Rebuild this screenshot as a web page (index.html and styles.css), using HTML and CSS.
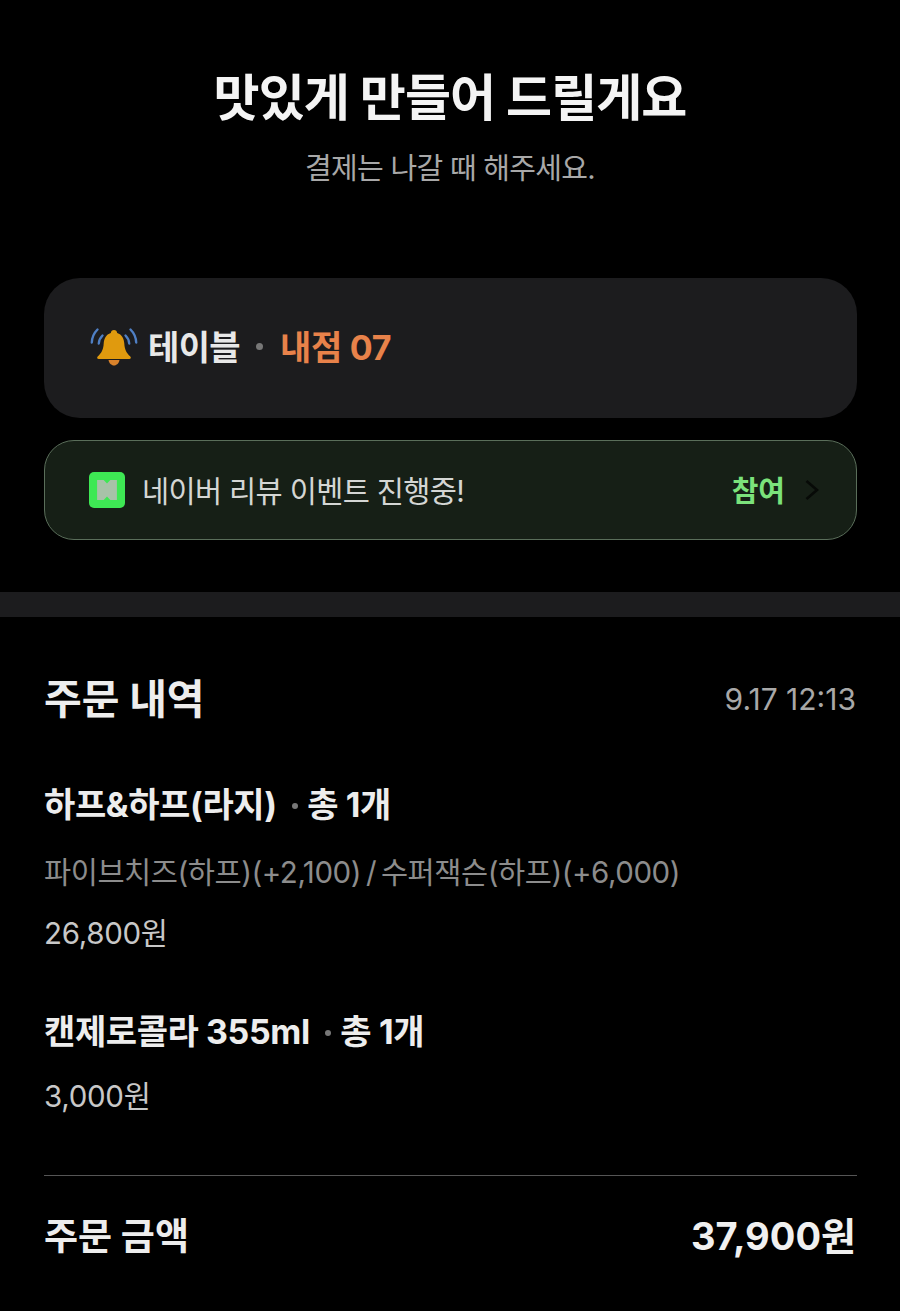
FILE: index.html
```html
<!DOCTYPE html>
<html lang="ko">
<head>
    <meta charset="UTF-8">
    <meta name="viewport" content="width=device-width, initial-scale=1.0">
    <title>주문 완료</title>
    <link rel="stylesheet" href="styles.css">
</head>
<body>

    <header class="top">
        <h1>맛있게 만들어 드릴게요</h1>
        <p>결제는 나갈 때 해주세요.</p>
    </header>

    <section class="cards">
        <div class="table-card">
            <svg class="bell" width="48" height="42" viewBox="0 0 48 42" fill="none">
                <path d="M24 3c1.800 0 3 1.200 3.200 3 4.800 1.500 6.800 5.500 7.100 10.500.3 6 2.200 9.500 6 13 1.100 1.100.4 2.500-1 2.500H8.700c-1.400 0-2.100-1.400-1-2.500 3.800-3.500 5.700-7 6-13C14 11.500 16 7.500 20.800 6 21 4.200 22.200 3 24 3z" fill="#e09a0e"/>
                <path d="M18.500 33h11c-.6 3.200-2.800 5.500-5.500 5.500s-4.900-2.300-5.500-5.500z" fill="#d9822b"/>
                <path d="M12.500 8.500c-2.300 2.300-3.500 5-3.700 8M7.500 2.500C4 6 2 10.500 1.800 15.500M35.500 8.500c2.300 2.300 3.500 5 3.700 8M40.500 2.500C44 6 46 10.500 46.200 15.500" stroke="#4f7fc4" stroke-width="2.400" stroke-linecap="round"/>
            </svg>
            <span class="table-label">테이블</span>
            <span class="table-dot"></span>
            <span class="table-name">내점 07</span>
        </div>

        <div class="event-card">
            <span class="naver-icon">
                <svg width="22" height="22" viewBox="0 0 20 20">
                    <path d="M1 1h6l3 3 3-3h6v18h-6l-3-3-3 3H1z" fill="#a8c2a8"/>
                </svg>
            </span>
            <span class="event-text">네이버 리뷰 이벤트 진행중!</span>
            <span class="event-join">참여</span>
            <svg class="chevron" width="16" height="24" viewBox="0 0 16 24" fill="none">
                <path d="M2.500 3l10.500 9-10.500 9" stroke="#070a07" stroke-width="2.600"/>
            </svg>
        </div>
    </section>

    <div class="divider"></div>

    <section class="order">
        <div class="order-head">
            <h2>주문 내역</h2>
            <span class="order-date">9.17 12:13</span>
        </div>

        <div class="item">
            <div class="item-title">하프&amp;하프(라지) <span class="item-dot"></span><span>총 1개</span></div>
            <div class="item-option">파이브치즈(하프)(+2,100) / 수퍼잭슨(하프)(+6,000)</div>
            <div class="item-price">26,800원</div>
        </div>

        <div class="item">
            <div class="item-title">캔제로콜라 355ml <span class="item-dot"></span><span>총 1개</span></div>
            <div class="item-price">3,000원</div>
        </div>

        <div class="total">
            <span class="total-label">주문 금액</span>
            <span class="total-price">37,900원</span>
        </div>
    </section>

</body>
</html>
```

FILE: styles.css
```css
* {
    box-sizing: border-box;
}
html, body {
    margin: 0;
    background: #000;
}
body {
    height: 1311px;
    overflow: hidden;
    color: #f0f0f0;
    font-family: Inter, "Noto Sans CJK KR", sans-serif;
}

.top {
    padding-top: 68px;
    text-align: center;
}
.top h1 {
    margin: 0;
    font-size: 50px;
    line-height: 60px;
    font-weight: 700;
    letter-spacing: -0.9px;
    color: #f4f4f4;
}
.top p {
    margin: 21px 0 0;
    font-size: 29px;
    line-height: 40px;
    font-weight: 400;
    letter-spacing: -0.7px;
    color: #a8a8a8;
}

.cards {
    padding: 89px 43px 0 44px;
}
.table-card {
    display: flex;
    align-items: center;
    height: 140px;
    padding: 0 44px 0 46px;
    background: #1c1c1e;
    border-radius: 36px;
}
.bell {
    margin: 0 10px 0 0;
}
.table-label {
    margin-bottom: 6px;
    font-size: 34px;
    font-weight: 700;
    letter-spacing: -0.6px;
    color: #e8e8e8;
}
.table-dot {
    width: 7px;
    height: 7px;
    margin: 0 17px 3px 16px;
    border-radius: 50%;
    background: #777;
}
.table-name {
    margin-bottom: 6px;
    font-size: 34px;
    font-weight: 700;
    letter-spacing: -0.3px;
    color: #e8824a;
}

.event-card {
    display: flex;
    align-items: center;
    height: 100px;
    margin-top: 22px;
    padding: 0 36px 0 44px;
    background: #161f16;
    border: 1.500px solid #5a6e5a;
    border-radius: 30px;
}
.naver-icon {
    display: flex;
    align-items: center;
    justify-content: center;
    width: 36px;
    height: 36px;
    margin-right: 17px;
    background: #3ee854;
    border-radius: 5px;
}
.event-text {
    flex: 1;
    margin-bottom: 3px;
    font-size: 29.500px;
    letter-spacing: -0.65px;
    color: #d4d6d4;
}
.event-join {
    margin: 0 19px 3px 0;
    font-size: 29px;
    font-weight: 700;
    color: #7be27b;
}

.divider {
    height: 25px;
    margin-top: 52px;
    background: #1c1c1e;
}

.order {
    padding: 0 43px 0 44px;
}
.order-head {
    display: flex;
    align-items: center;
    justify-content: space-between;
    padding: 52px 1px 0 0;
}
.order-head h2 {
    margin: 0;
    font-size: 41px;
    line-height: 60px;
    font-weight: 700;
    color: #ededed;
}
.order-date {
    font-size: 30px;
    color: #a8a8a8;
}

.item {
    margin-top: 53px;
}
.item + .item {
    margin-top: 56px;
}
.item-title {
    font-size: 34px;
    line-height: 46px;
    font-weight: 700;
    letter-spacing: -0.4px;
    color: #ededed;
}
.item-dot {
    display: inline-block;
    width: 6px;
    height: 6px;
    margin: 0 9px 4px 8px;
    border-radius: 50%;
    background: #777;
    vertical-align: middle;
}
.item-option {
    margin: 24px 0 2px;
    font-size: 29.500px;
    line-height: 40px;
    letter-spacing: -0.45px;
    word-spacing: -3px;
    color: #8c8c8c;
}
.item-price {
    margin-top: 21px;
    font-size: 29.500px;
    line-height: 40px;
    letter-spacing: -0.3px;
    color: #c8c8c8;
}

.total {
    display: flex;
    align-items: center;
    justify-content: space-between;
    margin-top: 59px;
    padding: 30px 1px 0 0;
    border-top: 1.500px solid #555;
}
.total-label {
    font-size: 37px;
    font-weight: 700;
    color: #ededed;
}
.total-price {
    font-size: 38px;
    font-weight: 700;
    color: #f0f0f0;
}
```
